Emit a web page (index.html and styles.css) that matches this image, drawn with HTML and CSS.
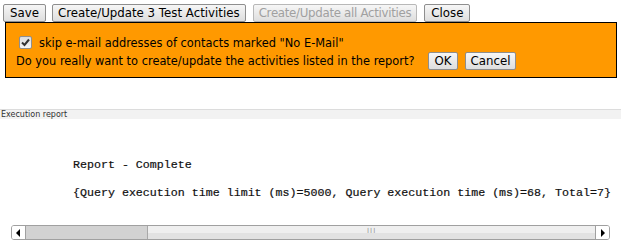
FILE: index.html
```html
<!DOCTYPE html>
<html>
<head>
<meta charset="utf-8">
<link rel="stylesheet" href="styles.css">
</head>
<body>
<div class="toolbar">
  <button class="btn btn-save">Save</button>
  <button class="btn">Create/Update 3 Test Activities</button>
  <button class="btn" disabled>Create/Update all Activities</button>
  <button class="btn btn-close">Close</button>
</div>
<div class="confirm">
  <label class="check-row"><span class="cb"><svg width="9" height="9" viewBox="0 0 9 9"><path d="M1 4.5 L3.5 7 L8 1.5" fill="none" stroke="#333" stroke-width="2"/></svg></span> skip e-mail addresses of contacts marked "No E-Mail"</label>
  <div class="question">
    <span>Do you really want to create/update the activities listed in the report?</span>
    <button class="btn">OK</button>
    <button class="btn">Cancel</button>
  </div>
</div>
<div class="report-head">Execution report</div>
<div class="report">
  <pre class="report-text">Report - Complete

{Query execution time limit (ms)=5000, Query execution time (ms)=68, Total=7}</pre>
</div>
<div class="hscroll">
  <div class="arrow left"><svg width="5" height="8" viewBox="0 0 5 8"><path d="M4 0 L0 4 L4 8 Z" fill="#000"/></svg></div>
  <div class="track">
    <div class="thumb"></div>
    <div class="grip">III</div>
  </div>
  <div class="arrow right"><svg width="5" height="8" viewBox="0 0 5 8"><path d="M1 0 L5 4 L1 8 Z" fill="#000"/></svg></div>
</div>
</body>
</html>
```
FILE: styles.css
```css
html, body {
  margin: 0;
  padding: 0;
  background: #fff;
}
body {
  font-family: "DejaVu Sans", Verdana, sans-serif;
  font-size: 11.4px;
  color: #000;
}
.toolbar {
  display: flex;
  gap: 6px;
  padding: 4px 3px 0 3px;
  height: 18px;
}
.btn {
  font-family: "DejaVu Sans", Verdana, sans-serif;
  font-size: 11.8px;
  height: 18px;
  line-height: 14px;
  padding: 0 5px;
  margin: 0;
  border: 1px solid #8e8e8e;
  border-radius: 2px;
  background: linear-gradient(#f6f6f6, #dedede);
  color: #000;
}
.btn-save {
  padding: 0 6px;
}
.btn-close {
  padding: 0 6px;
  margin-left: 1px;
}
.btn:disabled {
  color: #a0a0a0;
  border-color: #b8b8b8;
  letter-spacing: -0.3px;
  margin-left: 1px;
}
.confirm {
  margin: 0 4px 0 5px;
  height: 56px;
  box-sizing: border-box;
  background: #ff9900;
  border: 1px solid #000;
  padding: 13px 0 0 10px;
}
.check-row {
  display: flex;
  align-items: center;
  gap: 7px;
  height: 13px;
  margin-left: 3px;
}
.cb {
  display: flex;
  align-items: center;
  justify-content: center;
  width: 13px;
  height: 13px;
  box-sizing: border-box;
  border: 1px solid #8f8f8f;
  border-radius: 2px;
  background: linear-gradient(#dcdcdc, #f4f4f4);
}
.question {
  display: flex;
  align-items: center;
  gap: 7px;
  margin-top: 3px;
}
.question span {
  margin-right: 7px;
}
.report-head {
  margin-top: 31px;
  border-top: 1px solid #dcdcdc;
  background: #f2f2f2;
  height: 9px;
  font-size: 8px;
  line-height: 9px;
  color: #333;
  padding-left: 1px;
  font-family: "DejaVu Sans", Verdana, sans-serif;
}
.report {
  height: 106px;
  padding-left: 73px;
}
.report-text {
  margin: 0;
  padding-top: 39px;
  font-family: "Liberation Mono", "Courier New", monospace;
  font-size: 11.65px;
  line-height: 14px;
  white-space: pre;
  color: #111;
  -webkit-text-stroke: 0.2px #111;
}
.hscroll {
  display: flex;
  margin-left: 11px;
  width: 599px;
  height: 15px;
  box-sizing: border-box;
  border: 1px solid #a0a0a0;
  border-radius: 3px;
  overflow: hidden;
}
.arrow {
  width: 13px;
  display: flex;
  align-items: center;
  justify-content: center;
  background: #fff;
}
.arrow.left { border-right: 1px solid #a0a0a0; }
.arrow.right { border-left: 1px solid #a0a0a0; }
.track {
  flex: 1;
  position: relative;
  background: linear-gradient(#efefef 50%, #e2e2e2 50%);
}
.thumb {
  width: 121px;
  height: 100%;
  background: #d2d2d2;
  border-right: 1px solid #a8a8a8;
}
.grip {
  position: absolute;
  left: 341px;
  top: 1px;
  font-size: 7px;
  color: #999;
  letter-spacing: 1px;
}
```
